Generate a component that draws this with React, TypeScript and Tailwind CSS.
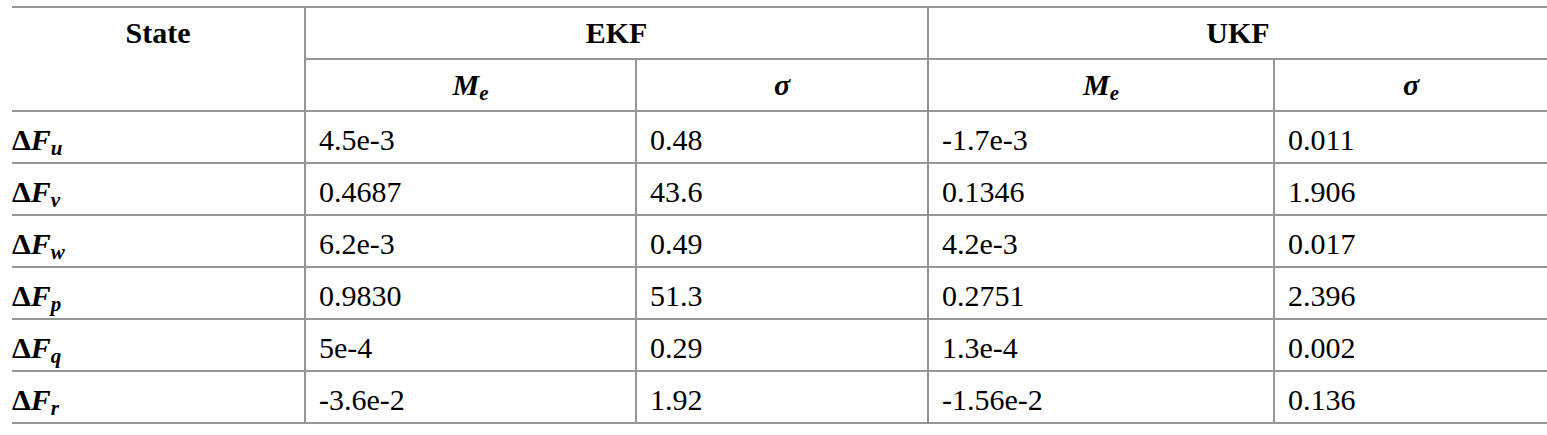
const rows = [
  { sub: "u", values: ["4.5e-3", "0.48", "-1.7e-3", "0.011"] },
  { sub: "v", values: ["0.4687", "43.6", "0.1346", "1.906"] },
  { sub: "w", values: ["6.2e-3", "0.49", "4.2e-3", "0.017"] },
  { sub: "p", values: ["0.9830", "51.3", "0.2751", "2.396"] },
  { sub: "q", values: ["5e-4", "0.29", "1.3e-4", "0.002"] },
  { sub: "r", values: ["-3.6e-2", "1.92", "-1.56e-2", "0.136"] },
];

function Me() {
  return (
    <span className="font-bold italic">
      M<sub className="text-[21px]">e</sub>
    </span>
  );
}

function Sigma() {
  return <span className="font-bold italic">σ</span>;
}

export default function App() {
  return (
    <div className="min-h-[435px] bg-white pt-[6px] pl-[12px] [font-family:'Liberation_Serif',serif] text-[30px] leading-[30px] text-black">
      <table className="w-[1535px] table-fixed border-separate border-spacing-0">
        <colgroup>
          <col className="w-[292px]" />
          <col className="w-[331px]" />
          <col className="w-[292px]" />
          <col className="w-[346px]" />
          <col className="w-[274px]" />
        </colgroup>
        <thead>
          <tr>
            <th
              rowSpan={2}
              className="h-[106px] border-y-2 border-[#969696] pt-[10px] text-center align-top font-bold"
            >
              State
            </th>
            <th
              colSpan={2}
              className="h-[54px] border-y-2 border-l-2 border-[#969696] pt-[10px] text-center align-top font-bold"
            >
              EKF
            </th>
            <th
              colSpan={2}
              className="h-[54px] border-y-2 border-l-2 border-[#969696] pt-[10px] text-center align-top font-bold"
            >
              UKF
            </th>
          </tr>
          <tr>
            <th className="h-[52px] border-b-2 border-l-2 border-[#969696] pt-[10px] text-center align-top font-normal">
              <Me />
            </th>
            <th className="h-[52px] border-b-2 border-l-2 border-[#969696] pt-[10px] text-center align-top font-normal">
              <Sigma />
            </th>
            <th className="h-[52px] border-b-2 border-l-2 border-[#969696] pt-[10px] text-center align-top font-normal">
              <Me />
            </th>
            <th className="h-[52px] border-b-2 border-l-2 border-[#969696] pt-[10px] text-center align-top font-normal">
              <Sigma />
            </th>
          </tr>
        </thead>
        <tbody>
          {rows.map((row) => (
            <tr key={row.sub}>
              <td className="h-[52px] border-b-2 border-[#969696] pt-[13px] text-left align-top font-bold">
                Δ<span className="italic">F</span>
                <sub className="text-[21px] italic">{row.sub}</sub>
              </td>
              {row.values.map((v, i) => (
                <td
                  key={i}
                  className="h-[52px] border-b-2 border-l-2 border-[#969696] pt-[13px] pl-[13px] text-left align-top"
                >
                  {v}
                </td>
              ))}
            </tr>
          ))}
        </tbody>
      </table>
    </div>
  );
}
